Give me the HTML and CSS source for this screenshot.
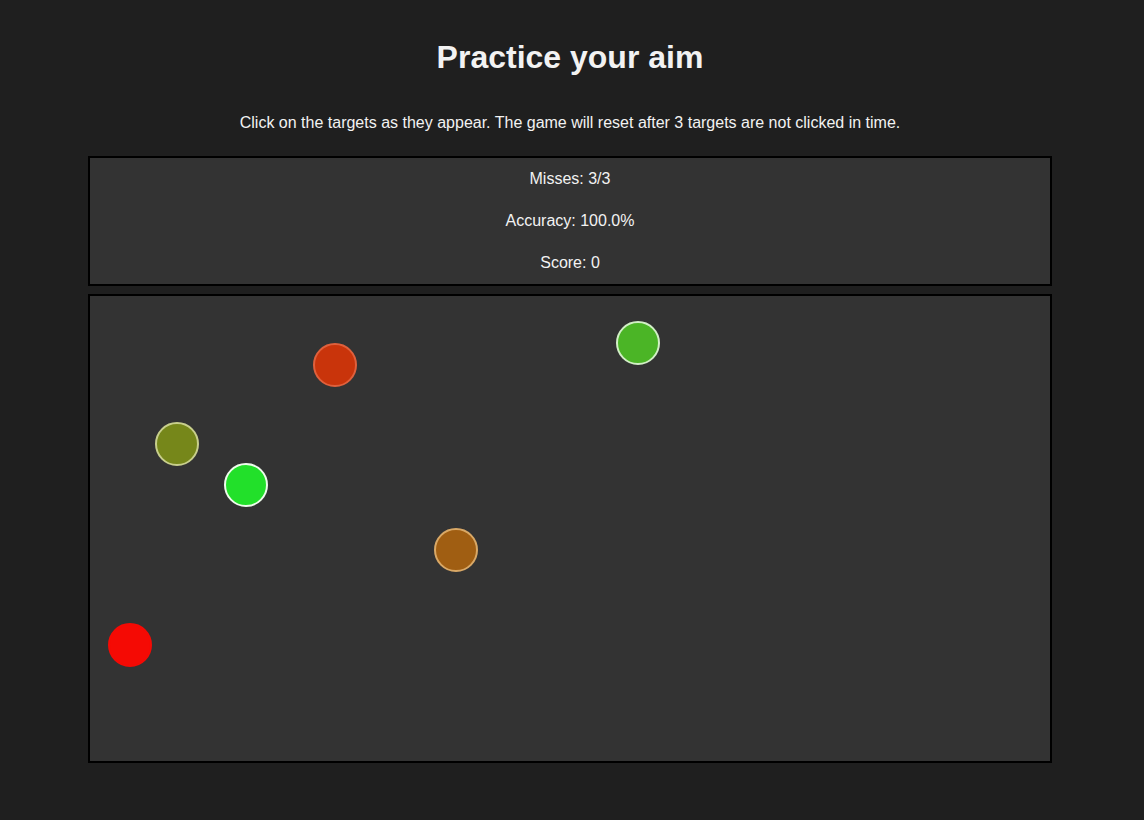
FILE: index.html
```html
<!DOCTYPE html>
<html lang="en">
<head>
<meta charset="utf-8">
<title>Practice your aim</title>
<link rel="stylesheet" href="styles.css">
</head>
<body>
  <main class="page">
    <h1 class="title">Practice your aim</h1>
    <p class="intro">Click on the targets as they appear. The game will reset after 3 targets are not clicked in time.</p>
    <section class="stats">
      <p class="stat">Misses: 3/3</p>
      <p class="stat">Accuracy: 100.0%</p>
      <p class="stat">Score: 0</p>
    </section>
    <section class="arena">
      <div class="target t-orange" style="left:223px;top:47px"></div>
      <div class="target t-olive" style="left:65px;top:126px"></div>
      <div class="target t-green" style="left:134px;top:167px"></div>
      <div class="target t-lime" style="left:526px;top:25px"></div>
      <div class="target t-brown" style="left:344px;top:232px"></div>
      <div class="target t-red" style="left:18px;top:327px"></div>
    </section>
  </main>
</body>
</html>
```
FILE: styles.css
```css
html, body {
  margin: 0;
  padding: 0;
  background: #1f1f1f;
}

body {
  font-family: "Liberation Sans", Arial, sans-serif;
  color: #f2f2f2;
  padding-right: 4px;
}

.page {
  width: 964px;
  margin: 0 auto;
  padding-top: 39px;
  text-align: center;
}

.title {
  margin: 0;
  font-size: 32px;
  line-height: 37px;
  font-weight: bold;
}

.intro {
  margin: 38px 0 24px;
  font-size: 16px;
  line-height: 18px;
}

.stats {
  box-sizing: border-box;
  height: 130px;
  border: 2px solid #000;
  background: #333333;
  padding: 12px 0 12px;
  display: flex;
  flex-direction: column;
  gap: 24px;
}

.stat {
  margin: 0;
  font-size: 16px;
  line-height: 18px;
}

.arena {
  position: relative;
  box-sizing: border-box;
  height: 469px;
  margin-top: 8px;
  border: 2px solid #000;
  background: #333333;
}

.target {
  position: absolute;
  box-sizing: border-box;
  width: 44px;
  height: 44px;
  border-radius: 50%;
  border: 2px solid transparent;
}

.t-orange { background: #c9340b; border-color: #e0603c; }
.t-olive  { background: #76871a; border-color: #c8cf8c; }
.t-green  { background: #22e02a; border-color: #eefcec; }
.t-lime   { background: #4bb526; border-color: #d2efc6; }
.t-brown  { background: #a05e12; border-color: #d9a866; }
.t-red    { background: #f50a04; border-color: #f50a04; }
```
